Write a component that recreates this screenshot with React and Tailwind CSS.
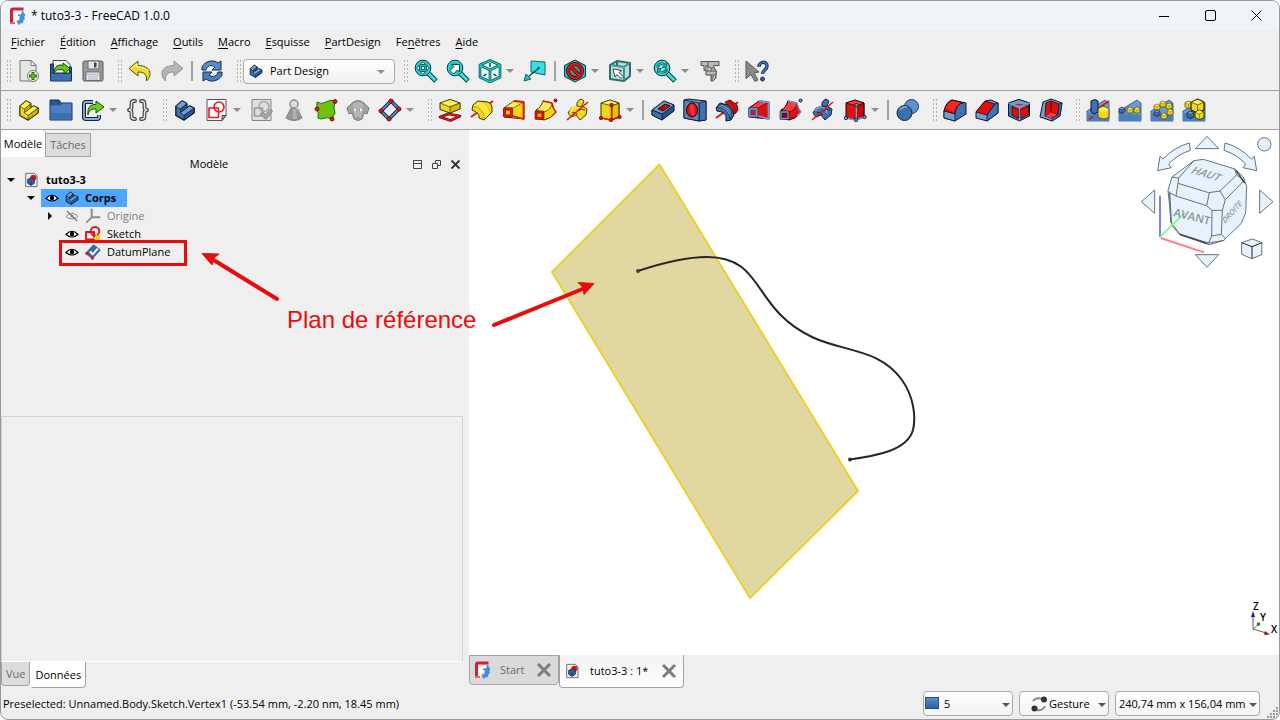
import React, { useState } from 'react';

/* --- PALETTE --- */

const Y = { light: '#fff05a', mid: '#f0d818', dark: '#c9a800', line: '#3a3300' };
const B = { light: '#729fcf', mid: '#3f72b4', dark: '#24508f', line: '#0b1521' };
const R = { light: '#ff3a3a', mid: '#dd0f0f', dark: '#a40000', line: '#280000' };
const T = { light: '#34e0e2', mid: '#16c3c6', dark: '#06989a', line: '#063a3c' };

/* --- ICONS --- */

const Icon = ({ children, className = 'h-6 w-6' }) => (
  <svg viewBox="0 0 24 24" className={className} fill="none" strokeLinejoin="round" aria-hidden="true">
    {children}
  </svg>
);

const Logo = ({ className }) => (
  <svg viewBox="0 0 16 18" className={className} fill="none" aria-hidden="true">
    <path d="M2.500 15.500V3Q2.500 2 4 2H14.500" stroke="#cf2435" strokeWidth="3" />
    <path d="M1 16H5V11.500H7" stroke="#ff5a64" strokeWidth="2" />
    <path d="M4 4H13V7H8.500V9H11V12H8V15H4Z" fill="#fff" />
    <path d="M13 4h1.500v2l1.500 1v2l-1 1 1 1.500-1 1.500-1 .5.5 1.500-1.500 1.500-1.500-.5-1 1.500H9l-.5-2-1-1 .5-1 2.500-.5V9H9V7.500H12Z" fill="#418fde" />
  </svg>
);

/* L shaped solid, used for the body, part and workbench entries */
const Solid = ({ c, className }) => (
  <Icon className={className}>
    <path d="M2 8l7-6 5 3v5l3-2.500 5 2.500v5l-11 8-9-5z" fill={c.mid} stroke={c.line} strokeWidth="1.400" />
    <path d="M2 8l7-6 5 3-7 6z" fill={c.light} stroke={c.line} strokeWidth=".7" />
    <path d="M7 11l7-6v5l-7 5z" fill={c.dark} stroke={c.line} strokeWidth=".7" />
    <path d="M7 15l10-7.500 5 2.500-11 8z" fill={c.light} stroke={c.line} strokeWidth=".7" />
    <path d="M11 18l11-8v5l-11 8z" fill={c.dark} fillOpacity=".7" stroke={c.line} strokeWidth=".7" />
  </Icon>
);

const Doc = ({ className }) => (
  <Icon className={className}>
    <path d="M4 2h13l4 4v16H4z" fill="#f4f4f2" stroke="#666" strokeWidth="1.400" />
    <circle cx="15.500" cy="8.500" r="4.500" fill="#d81414" />
    <path d="M7 11l5-2 5 2v6l-5 3-5-3z" fill="#2f62a8" stroke="#10233f" strokeWidth="1.200" />
    <path d="M12 13v7" stroke="#10233f" />
  </Icon>
);

const NewIcon = () => (
  <Icon>
    <path d="M3 1.500h11l5 5V22H3z" fill="#e6e7e3" stroke="#777" />
    <path d="M14 1.500l5 5h-5z" fill="#fff" stroke="#777" />
    <circle cx="16" cy="17" r="5.500" fill="#f4f4f4" stroke="#777" />
    <path d="M16 13v8M12 17h8" stroke="#2d6a00" strokeWidth="3" />
    <path d="M16 14v6M13 17h6" stroke="#73d216" strokeWidth="1.200" />
  </Icon>
);

const OpenIcon = () => (
  <Icon>
    <path d="M4 1.500h13l4 4v10H4z" fill="#f2f2f2" stroke="#444" />
    <path d="M1.500 5h3v9h16V8h2v14h-21z" fill="#27568f" stroke="#12325b" />
    <path d="M2 15h20v6.500H2z" fill="#3c6fb0" />
    <path d="M5 14C5 7 10 5 14 6.500V4l7 5.500-6 5.500v-3.500C11 10 8 10 5 14z" fill="#63c61b" stroke="#1c4d02" />
  </Icon>
);

const SaveIcon = () => (
  <Icon>
    <rect x="2" y="2" width="20" height="20" rx="1.500" fill="#9a9a96" stroke="#5a5a58" />
    <rect x="7" y="2" width="11" height="8" fill="#e5e5e5" stroke="#6b6b6b" />
    <rect x="13" y="3.500" width="2.500" height="5" fill="#444" />
    <rect x="5" y="13" width="14" height="8.500" fill="#f1f3f5" stroke="#6b6b6b" />
    <path d="M6 15.500h12" stroke="#a9c6e6" strokeWidth="2" />
    <path d="M7 18h10M7 20h10" stroke="#aaa" />
  </Icon>
);

const UndoIcon = () => (
  <Icon>
    <path d="M1 9.500L10 2v4.500c8 0 12.500 4 12 9-.3 3-2 5-3.500 6.500C19 16 17 13 10 13v4z" fill="#eedb2e" stroke="#5d5100" />
    <path d="M3 9.500L9 5v3c5 0 9 1 11 4" stroke="#fff9a5" />
  </Icon>
);

const RedoIcon = () => (
  <Icon>
    <path d="M23 9.500L14 2v4.500c-8 0-12.500 4-12 9 .3 3 2 5 3.500 6.500C5 16 7 13 14 13v4z" fill="#b5b5b5" stroke="#929292" />
  </Icon>
);

const RefreshIcon = () => (
  <Icon>
    <path d="M2 11V8c3-6 11-8 16-4l3-2v9h-9l3-3C11 5 7 7 6 11z" fill="#5b8ec9" stroke="#0f2c52" />
    <path d="M22 13v3c-3 6-11 8-16 4l-3 2v-9h9l-3 3c4 3 8 1 9-3z" fill="#4a7fc0" stroke="#0f2c52" />
  </Icon>
);

const Lens = ({ children }) => (
  <Icon>
    <path d="M14 14l8 8" stroke={T.line} strokeWidth="5" />
    <path d="M14 14l7.500 7.500" stroke={T.light} strokeWidth="3" />
    <circle cx="9" cy="9" r="7.800" fill={T.mid} stroke={T.line} />
    <circle cx="9" cy="9" r="6.600" stroke={T.light} />
    {children}
  </Icon>
);

const FitAllIcon = () => (
  <Lens>
    <path d="M9 2.500l2.500 3h-5zM9 15.500l2.500-3h-5zM2.500 9l3-2.500v5zM15.500 9l-3-2.500v5z" fill="#fff" stroke="#063a3c" strokeWidth=".8" />
    <rect x="7.500" y="7.500" width="3" height="3" fill="#fff" stroke="#063a3c" strokeWidth=".8" />
  </Lens>
);

const FitSelIcon = () => (
  <Lens>
    <path d="M4 11.500l4-4-2-2h7.500v7.500l-2-2-4 4z" fill="#fff" stroke="#063a3c" strokeWidth=".9" />
  </Lens>
);

const SyncViewIcon = () => (
  <Lens>
    <circle cx="9" cy="9" r="6" fill="#a4e5e3" />
    <path d="M4.500 8.500C5 4.500 9 4 11.500 5.500M13.500 9.500C13 13.500 9 14 6.500 12.500" stroke={T.line} strokeWidth="2.600" />
    <path d="M4.500 8.500C5 4.500 9 4 11.500 5.500M13.500 9.500C13 13.500 9 14 6.500 12.500" stroke={T.mid} strokeWidth="1.500" />
    <path d="M13.500 4v4.500H9.500zM4.500 14V9.500h4z" fill={T.mid} stroke={T.line} strokeWidth=".7" />
  </Lens>
);

const IsoIcon = () => (
  <Icon>
    <path d="M12 1.500l10 4.500v12l-10 5-10-5V6z" fill="#e8f6f6" stroke={T.line} strokeWidth="2.600" />
    <path d="M2 6l10 5 10-5M12 11v12" stroke={T.line} strokeWidth="2.600" />
    <path d="M12 1.500l10 4.500v12l-10 5-10-5V6zM2 6l10 5 10-5M12 11v12" stroke={T.mid} strokeWidth="1.400" />
    <path d="M12 4v4M5.500 17l3-2M18.500 17l-3-2" stroke={T.line} strokeWidth="1.500" />
  </Icon>
);

const AlignIcon = () => (
  <Icon>
    <path d="M8 2l14 1v13L8 13z" fill={T.light} stroke="#0b6a6c" />
    <path d="M16 9L5 18" stroke="#053d3e" strokeWidth="1.200" />
    <circle cx="15.500" cy="9" r="1.200" fill="#053d3e" />
    <path d="M1 22l2-7 5 5z" fill={T.mid} stroke="#0b6a6c" />
  </Icon>
);

const DrawStyleIcon = () => (
  <Icon>
    <path d="M12 1l10.500 5.500v11L12 23 1.500 17.500v-11z" fill={T.mid} stroke={T.line} />
    <circle cx="12" cy="12" r="7" fill="#4f8789" stroke="#3d0000" strokeWidth="3.800" />
    <path d="M7.500 7.500l9 9" stroke="#3d0000" strokeWidth="3.600" />
    <circle cx="12" cy="12" r="7" stroke="#d81818" strokeWidth="2.400" />
    <path d="M7 7l10 10" stroke="#d81818" strokeWidth="2.400" />
  </Icon>
);

const SelectViewIcon = () => (
  <Icon>
    <path d="M2 6l7-4 13 2v13l-6 5-14-2z" fill="#b4dfde" stroke="#2c6e70" strokeWidth="2" />
    <path d="M2 6l14 2 6-4M16 8v14M9 2v5" stroke="#2c6e70" strokeWidth="2" />
    <path d="M2.500 6.300l13.500 2 5.500-4M16 8v13.500" stroke="#7fd0d0" strokeWidth=".7" />
    <path d="M5 10l8.500 1.500-2.500 2 4 4-2 2-4-4-2 2.500z" fill="#fff" stroke="#333" strokeWidth=".9" />
  </Icon>
);

const MeasureIcon = () => (
  <Icon>
    <path d="M3 2.500h18v4h-5V9l2 2v8l-3 3h-2V9.500L8 6.500v5H6v-5H3z" fill="#b9bab6" stroke="#555753" />
    <path d="M8 12h10v4H8zM13 9h3M13 18h3M13 20h2M10 3v9" fill="#b9bab6" stroke="#555753" />
  </Icon>
);

const WhatsIcon = () => (
  <Icon>
    <path d="M1 2l13 11-5 1 4 7-3 1.500-4-7-5 4z" fill="#888a85" stroke="#555753" />
    <path d="M14 8c0-6 8-6 8-1 0 4-4.500 4-4.500 8" stroke="#1d3766" strokeWidth="3.500" />
    <path d="M14 8c0-6 8-6 8-1 0 4-4.500 4-4.500 8" stroke="#4b77b8" strokeWidth="1.500" />
    <circle cx="17.500" cy="20" r="2" fill="#3465a4" stroke="#1d3766" />
  </Icon>
);

const FolderIcon = () => (
  <Icon>
    <path d="M1 2h9l2 3h11v17H1z" fill="#27568f" stroke="#12325b" />
    <path d="M1.500 7h10l2-1.500h9V21.500h-21z" fill="#4d80bf" stroke="#2b5d9e" />
    <path d="M2 15h20v6.500H2z" fill="#3c6fb0" />
  </Icon>
);

const LinkIcon = () => (
  <Icon>
    <path d="M12 4H5Q3 4 3 6V19Q3 21 5 21H16Q18 21 18 19V17" stroke="#10233f" strokeWidth="4" />
    <path d="M12 4H5Q3 4 3 6V19Q3 21 5 21H16Q18 21 18 19V17" stroke="#86aedb" strokeWidth="1.800" />
    <path d="M7 17C6 9 10 6 15 6.500V3l8 6-8 6v-4C11 10.500 8 12 7 17z" fill="#6bcf1c" stroke="#1c4d02" />
  </Icon>
);

const bracesPath = 'M9 3H8Q5.500 3 5.500 6V9Q5.500 12 3 12 5.500 12 5.500 15V18Q5.500 21 8 21H9M15 3h1Q18.500 3 18.500 6V9Q18.500 12 21 12 18.500 12 18.500 15V18Q18.500 21 16 21H15';

const BracesIcon = () => (
  <Icon>
    <path d={bracesPath} stroke="#3a3d3e" strokeWidth="3.800" strokeLinecap="round" />
    <path d={bracesPath} stroke="#e4e6e6" strokeWidth="1.500" strokeLinecap="round" />
  </Icon>
);

const SketchNewIcon = () => (
  <Icon>
    <path d="M2 1.500h19v16l-4 5H2z" fill="#fff" stroke="#555" />
    <path d="M21 17.500l-4 5v-5z" fill="#aaa" stroke="#444" />
    <rect x="4" y="10" width="9.500" height="9.500" stroke="#f01818" strokeWidth="1.600" />
    <circle cx="14" cy="9" r="5" stroke="#f01818" strokeWidth="1.600" />
  </Icon>
);

const ValidateIcon = () => (
  <Icon>
    <path d="M2 1.500h19v21H2z" fill="#dedede" stroke="#888" />
    <rect x="4.500" y="10" width="8" height="8" stroke="#999" strokeWidth="1.500" />
    <circle cx="14" cy="8.500" r="5" stroke="#a5a5a5" strokeWidth="1.500" />
    <path d="M10 16l3-2 2.500 2.500 5-5.500 2 2-6.500 8.500z" fill="#a5a5a5" stroke="#8a8a8a" />
  </Icon>
);

const CheckGeoIcon = () => (
  <Icon>
    <path d="M9 10h6l5 10q-8 5-16 0z" fill="#989898" stroke="#808080" />
    <path d="M11 11h3l1 10h-4z" fill="#b0b0b0" />
    <circle cx="12" cy="6" r="4" fill="#ddd" stroke="#8f8f8f" strokeWidth="1.500" />
    <path d="M14 9l4 4" stroke="#c5c5c5" strokeWidth="2" />
  </Icon>
);

const BinderIcon = () => (
  <Icon>
    <path d="M3 4q5 3 9 0 5-3 9-1-2 8 0 12-3 6-4 6-3-2-6-1-4 2-7 0 1-6-1-8z" fill="#6ac50f" stroke="#2c6a00" />
    <circle cx="3" cy="11" r="2" fill="#e01515" stroke="#7a0000" strokeWidth=".8" />
    <circle cx="21" cy="3.500" r="2" fill="#e01515" stroke="#7a0000" strokeWidth=".8" />
    <circle cx="18" cy="21" r="2" fill="#e01515" stroke="#7a0000" strokeWidth=".8" />
  </Icon>
);

const CloneIcon = () => (
  <Icon>
    <path d="M6 5q6-5 12 0l5 5-2 6-3-1-2 6q-4 3-8 0l-2-6-3 1-2-6z" fill="#a2a2a2" stroke="#7d7d7d" />
    <path d="M7 6q0 9 3 15h4q3-6 3-15-5-4-10 0z" fill="#b5b5b5" />
    <circle cx="9.500" cy="12" r="1.300" fill="#fff" />
    <circle cx="14.500" cy="12" r="1.300" fill="#fff" />
    <path d="M10 12h1M13 12h1" stroke="#444" strokeWidth="1.200" />
    <path d="M10.500 20h3" stroke="#777" />
  </Icon>
);

const DatumIcon = () => (
  <Icon>
    <path d="M13 3l8 8-10 10-8-8z" stroke="#10233f" strokeWidth="3.800" />
    <path d="M13 3l8 8-10 10-8-8z" stroke="#4d80bf" strokeWidth="2" />
    {[[13, 3], [21, 11], [11, 21], [3, 13]].map(([x, y]) => (
      <circle key={x} cx={x} cy={y} r="2" fill="#e01515" stroke="#7a0000" strokeWidth=".8" />
    ))}
  </Icon>
);

const PadIcon = () => (
  <Icon>
    <path d="M2 19l8-3 12 2-9.500 4.500z" fill="#f5f5f5" stroke="#500000" strokeWidth="2.600" />
    <path d="M2 19l8-3 12 2-9.500 4.500z" stroke="#e01515" strokeWidth="1.400" />
    <path d="M2 5v6.500l10 3.500 10-4V5L12 1.500z" fill={Y.mid} stroke={Y.line} />
    <path d="M2 5l10-3.500L22 5l-10 4z" fill={Y.light} stroke={Y.line} strokeWidth=".7" />
    <path d="M12 9v6l10-4V5z" fill="#d8b90c" stroke={Y.line} strokeWidth=".7" />
  </Icon>
);

const RevolveIcon = () => (
  <Icon>
    <path d="M1 19L23 3" stroke="#e01515" strokeWidth="2" />
    <path d="M2 12l1-5 5-4 10 1q4 2 4 5v5l-8 8-5-2q1-5-7-8z" fill={Y.mid} stroke={Y.line} />
    <path d="M3 8l5-4q7 1 10 7l1 5-4.500 5Q14 9 3 8z" fill={Y.light} fillOpacity=".7" />
    <path d="M3 8q11 2 11.500 13" stroke={Y.dark} />
  </Icon>
);

const Loft = ({ c, edge, dark }) => (
  <Icon>
    <path d="M2 10L12 3l10 1v17L2 19z" fill={c.mid} stroke={c.line} />
    <path d="M2 10L12 3l10 1-11 6z" fill={c.light} stroke={c.line} strokeWidth=".6" />
    <path d="M12 3l9.500 1v17L11 18" stroke={edge} strokeWidth="1.800" />
    <rect x="2.500" y="11" width="7" height="7" fill={c.mid} stroke={dark} strokeWidth="2.800" />
    <rect x="2.500" y="11" width="7" height="7" stroke={edge} strokeWidth="1.600" />
  </Icon>
);

const Pipe = ({ c, edge, dark }) => (
  <Icon>
    <path d="M2 12Q7 10 9 3l9 2q1 6 4 9-5 7-12 8l-8-2z" fill={c.mid} stroke={c.line} />
    <path d="M2 12Q7 10 9 3l9 2q-1 7-8 9z" fill={c.light} stroke={c.line} strokeWidth=".7" />
    <path d="M9 3l9 2q1 6 4 9l-4 4" stroke={edge} strokeWidth="1.400" />
    <rect x="2" y="14" width="7" height="6.500" fill={c.dark} stroke={dark} strokeWidth="2.600" />
    <rect x="2" y="14" width="7" height="6.500" stroke={edge} strokeWidth="1.400" />
    <circle cx="21.500" cy="2.500" r="1.500" fill={edge} stroke={dark} />
  </Icon>
);

const Helix = ({ c, edge }) => (
  <Icon>
    <path d="M11 8q-1-5 4-7l3 2-2 5 5 3-1 6-6 5-4-5-5 2-3-4 3-5z" fill={c.mid} stroke={c.line} strokeWidth=".9" />
    <path d="M4 13q2-4 7-4 4 1 5 6" stroke={c.light} strokeWidth="1.800" />
    <path d="M6 15q4-2 5 2M16 8q-3 1-5 0M12 13q3-3 7-1" stroke={c.line} strokeWidth=".9" />
    <path d="M1 22L22 4" stroke={edge} strokeWidth="1.600" />
  </Icon>
);

const Cube = ({ c, edge, dark }) => (
  <Icon>
    <path d="M3 5l9-3 9 3v14l-8 3-10-2z" fill={c.mid} stroke={c.line} />
    <path d="M3 5l9-3 9 3-7 3z" fill={c.light} stroke={c.line} strokeWidth=".7" />
    <path d="M14 8l7-3v14l-7 3z" fill={c.dark} fillOpacity=".45" stroke={c.line} strokeWidth=".7" />
    <path d="M3 20l10 2 8-3M13.500 7v15" stroke={edge} strokeWidth="1.500" />
    {[[3, 20], [13.5, 7], [13, 22], [21.5, 19]].map(([x, y]) => (
      <circle key={x} cx={x} cy={y} r="1.700" fill={edge} stroke={dark} strokeWidth=".8" />
    ))}
  </Icon>
);

const PocketIcon = () => (
  <Icon>
    <path d="M1 12L13 3l10 4v6l-12 9-10-5z" fill={B.dark} stroke={B.line} />
    <path d="M1 12L13 3l10 4-12 9z" fill={B.light} stroke={B.line} strokeWidth=".8" />
    <path d="M1 12l10 4v6L1 17z" fill={B.mid} stroke={B.line} strokeWidth=".8" />
    <path d="M7 11l7-5 5 2-7 5z" fill={R.mid} stroke={R.line} />
    <path d="M7 11l7-5v4l-3 2.500z" fill={R.dark} />
  </Icon>
);

const HoleIcon = () => (
  <Icon>
    <path d="M1 2l4-1 18 2v19l-7 1-15-3z" fill={B.light} stroke={B.line} />
    <path d="M16 5l7-2v19l-7 1z" fill={B.mid} stroke={B.line} strokeWidth=".8" />
    <path d="M1 2l15 3v18L1 20z" fill="#5788c4" stroke={B.line} strokeWidth=".8" />
    <ellipse cx="9" cy="12" rx="5.500" ry="7" fill={R.mid} stroke={R.line} />
    <path d="M8 5.500q5 3 3 12.500-6-2-3-12.500z" fill={R.light} />
  </Icon>
);

const GrooveIcon = () => (
  <Icon>
    <path d="M1 20L23 4" stroke="#e01515" strokeWidth="2" />
    <path d="M10 4l5-2 7 5 1 5-3 4-7-8z" fill={R.mid} stroke={R.line} strokeWidth=".8" />
    <path d="M14 3q6 4 7 12" stroke={R.dark} />
    <path d="M1 10l4-5 8 2q6 5 6 10l-3 5-5 1v-6l-4-3-5-1z" fill={B.mid} stroke={B.line} />
    <path d="M2 9l4-3q9 2 11 10l-2 5Q14 11 2 9z" fill={B.light} stroke={B.line} strokeWidth=".7" />
    <path d="M4 7.500q11 3 12.500 11" stroke={B.dark} strokeWidth=".9" />
  </Icon>
);

const BooleanIcon = () => (
  <Icon>
    <circle cx="15.500" cy="8.500" r="7" fill="#5f92cb" stroke="#1b3f70" />
    <circle cx="8.500" cy="15" r="7.500" fill="#3c6fb0" stroke="#10233f" />
    <path d="M4 12q3-4 7-3" stroke={B.light} strokeWidth="2" />
  </Icon>
);

const FilletIcon = () => (
  <Icon>
    <path d="M1 13Q3 4 9 2l14 3v11l-11 7-11-3z" fill={B.mid} stroke={B.line} />
    <path d="M1 13Q3 4 9 2l11 3q-7 1-8 11z" fill={R.mid} stroke={R.line} strokeWidth=".8" />
    <path d="M3 10q2-6 7-7l8 2q-6 2-7 9z" fill={R.light} fillOpacity=".6" />
    <path d="M1 13l11 3v7L1 20z" fill={B.light} stroke={B.line} strokeWidth=".8" />
  </Icon>
);

const ChamferIcon = () => (
  <Icon>
    <path d="M1 14L10 3l6-1 7 3v10l-11 8-11-3z" fill={B.light} stroke={B.line} />
    <path d="M1 14L10 3l10 3-8 11z" fill={R.mid} stroke={R.line} strokeWidth=".8" />
    <path d="M12 17l8-11 3-1v10l-11 8z" fill={B.mid} stroke={B.line} strokeWidth=".8" />
  </Icon>
);

const DraftIcon = () => (
  <Icon>
    <path d="M1.500 5L12 1.500 22.500 5v13L12.500 23l-11-5z" fill={B.mid} stroke={B.line} />
    <path d="M1.500 5L12 1.500 22.500 5 12.500 9z" fill={B.light} stroke={B.line} strokeWidth=".8" />
    <path d="M5 9l6.500 2.500v9L5 17zM21.500 8l-8 3.500v9l8-4z" fill={R.mid} stroke={R.line} strokeWidth=".7" />
    <path d="M5 9l6-3 10.500 2-8.500 3.500z" fill={R.light} stroke={R.line} strokeWidth=".5" />
    <path d="M1.500 5l11 4 10-4M12.500 9v13.500" stroke={B.light} strokeWidth="1.400" />
  </Icon>
);

const ThicknessIcon = () => (
  <Icon>
    <path d="M4 4l8-3 11 4-2 13-8 5-12-4z" fill={B.light} stroke={B.line} />
    <path d="M7 5l5-2 8 3-1 11-7 3-6-2z" fill={R.mid} stroke={R.line} strokeWidth=".8" />
    <path d="M12 3v11l7 3M12 14l-6 4" stroke={R.line} strokeWidth=".8" />
    <path d="M12 14l7 3-7 3-6-2z" fill={R.light} />
    <path d="M20 6l3-1-2 13-8 5v-3l6-3z" fill={B.mid} stroke={B.line} strokeWidth=".7" />
  </Icon>
);

/* small cube used by the pattern tools */
const Mini = ({ x, y, s = 6, c = Y }) => (
  <g transform={`translate(${x} ${y}) scale(${s / 6})`}>
    <path d="M0 1.500L3 0l3 1.500V5L3 6.500 0 5z" fill={c.mid} stroke={c.line} strokeWidth=".6" />
    <path d="M.4 1.500L3 .4l2.600 1.100L3 2.700z" fill={c.light} />
    <path d="M0 1.500l3 1.200 3-1.200M3 2.700v3.800" stroke={c.line} strokeWidth=".3" />
  </g>
);

const Slope = ({ children }) => (
  <Icon>
    <path d="M1 13L19 2l4 3v18H1z" fill="#6b9bd2" stroke={B.dark} strokeWidth=".8" />
    <path d="M1 15l22 2v6H1z" fill="#4c7fbe" />
    {children}
  </Icon>
);

const MirrorIcon = () => (
  <Slope>
    <path d="M13 10l10-7" stroke="#e01515" strokeWidth="2" />
    <path d="M5 3l4-1.500L12 3v11l-4 2-3-2z" fill={B.mid} stroke={B.line} />
    <path d="M12 12q0-2 5-4 6 2 6 4v7q-5 4-11 0z" fill={Y.mid} stroke={Y.line} strokeWidth=".7" />
    <ellipse cx="17.500" cy="11.500" rx="4.500" ry="2" fill={Y.light} />
    <path d="M3 21.500l4-3" stroke="#e01515" strokeWidth="2" />
  </Slope>
);

const LinearIcon = () => (
  <Slope>
    <Mini x={1} y={9} c={B} /><Mini x={9} y={9} /><Mini x={16} y={9} />
  </Slope>
);

const PolarIcon = () => (
  <Slope>
    <Mini x={4} y={6} /><Mini x={10} y={3} /><Mini x={16} y={5} /><Mini x={17} y={11} /><Mini x={11} y={15} /><Mini x={4} y={12} c={B} />
  </Slope>
);

const MultiIcon = () => (
  <Slope>
    <Mini x={3} y={3} s={7} /><Mini x={9} y={1} s={13} /><Mini x={5} y={13} s={7} c={B} /><Mini x={13} y={12} s={9} />
  </Slope>
);

const Eye = ({ off }) => (
  <svg viewBox="0 0 14 12" className="h-3 w-3.5 shrink-0" fill="none" aria-hidden="true">
    <path d="M1 6.500Q7 0 13 6.500 7 11.500 1 6.500z" fill={off ? 'none' : '#fff'} stroke={off ? '#888' : '#000'} strokeWidth={off ? 1 : 1.2} />
    <circle cx="7" cy="6" r={off ? 1.6 : 2.2} fill={off ? '#999' : '#000'} />
    {off && <path d="M2 1l10 10" stroke="#777" strokeWidth="1.200" />}
  </svg>
);

const OriginIcon = () => (
  <Icon className="h-4 w-4 shrink-0">
    <path d="M10 1v13h13M10 14l-8 8" stroke="#8d8d8d" strokeWidth="3" />
  </Icon>
);

const SketchIcon = () => (
  <Icon className="h-4 w-4 shrink-0">
    <rect x="1.500" y="9" width="12" height="11" stroke="#d3161d" strokeWidth="2.800" />
    <circle cx="15" cy="8" r="6.500" stroke="#d3161d" strokeWidth="2.800" />
    <path d="M17 11l2 3.500 4.500-1-2 4.500 2 4.500-4.500-1-3 2.500-1-4-4-2 4-2z" fill="#f4c71c" />
  </Icon>
);

const PlaneIcon = () => (
  <Icon className="h-4 w-4 shrink-0">
    <path d="M13 3l8 6-10 11-8-6z" fill="#3c6aa8" stroke="#3c6aa8" strokeWidth="4" />
    <path d="M7.500 11l4 4.500L19 7" stroke="#fff" strokeWidth="3" />
    <circle cx="3" cy="14" r="2.500" fill="#e01515" />
    <circle cx="11" cy="21" r="2.500" fill="#e01515" />
  </Icon>
);

/* --- TOOLBARS --- */

const Tool = ({ label, children }) => (
  <button type="button" aria-label={label} className="flex h-8 w-8 shrink-0 items-center justify-center">{children}</button>
);

const Caret = ({ label = 'Plus' }) => (
  <button type="button" aria-label={label} className="flex h-8 w-[13px] shrink-0 items-center">
    <span className="border-x-4 border-t-4 border-x-transparent border-t-[#8c8c8c]" />
  </button>
);

const Sep = () => (
  <span className="flex w-2 shrink-0 justify-center"><span className="h-5 w-0.5 bg-[#a3a3a3]" /></span>
);

const Group = ({ children }) => (
  <div className="flex items-center">
    <span className="flex w-2 shrink-0 justify-center">
      <span className="h-6 w-1.5 bg-[radial-gradient(circle,#b4b4b4_1px,transparent_1px)] bg-[size:3px_4px]" />
    </span>
    {children}
  </div>
);

const menus = [
  ['F', 'ichier'], ['É', 'dition'], ['A', 'ffichage'], ['O', 'utils'], ['M', 'acro'],
  ['E', 'squisse'], ['P', 'artDesign'], ['Fe', 'nêtres'], ['A', 'ide'],
];

const TitleBar = () => (
  <header className="flex h-[29px] items-center bg-[#f0f3f8] pl-2">
    <Logo className="h-[18px] w-4" />
    <h1 className="ml-1.5 flex-1 text-[12px]">* tuto3-3 - FreeCAD 1.0.0</h1>
    <button type="button" aria-label="Réduire" className="flex h-full w-[46px] items-center justify-center">
      <svg viewBox="0 0 10 10" className="h-2.5 w-2.5" stroke="#000"><path d="M0 5.500h10" /></svg>
    </button>
    <button type="button" aria-label="Agrandir" className="flex h-full w-[46px] items-center justify-center">
      <svg viewBox="0 0 11 11" className="h-[11px] w-[11px]" fill="none" stroke="#000"><rect x=".5" y=".5" width="10" height="10" rx="1.500" /></svg>
    </button>
    <button type="button" aria-label="Fermer" className="flex h-full w-[46px] items-center justify-center">
      <svg viewBox="0 0 11 11" className="h-[11px] w-[11px]" stroke="#000"><path d="M.5.5l10 10M10.500.5l-10 10" /></svg>
    </button>
  </header>
);

const MenuBar = () => (
  <nav className="flex h-6 items-center gap-[15px] pl-2.5">
    {menus.map(([a, b]) => (
      <button type="button" key={a + b}>
        {a === 'Fe'
          ? <>Fe<span className="underline underline-offset-2">n</span>êtres</>
          : <><span className="underline underline-offset-2">{a}</span>{b}</>}
      </button>
    ))}
  </nav>
);

const FileBar = () => (
  <div className="flex h-[37px] items-center gap-[7px] border-b border-[#a3a3a3] pb-0.5 pl-1">
    <Group>
      <Tool label="Nouveau"><NewIcon /></Tool>
      <Tool label="Ouvrir"><OpenIcon /></Tool>
      <Tool label="Enregistrer"><SaveIcon /></Tool>
    </Group>
    <Group>
      <Tool label="Annuler"><UndoIcon /></Tool>
      <Tool label="Rétablir"><RedoIcon /></Tool>
      <Sep />
      <Tool label="Actualiser"><RefreshIcon /></Tool>
    </Group>
    <Group>
      <div className="relative">
        <select aria-label="Atelier" className="h-[25px] w-[152px] appearance-none rounded-sm border border-[#a9a9a9] bg-linear-to-b from-white to-[#f0f0f0] pl-[26px]">
          <option>Part Design</option>
        </select>
        <span className="pointer-events-none absolute top-[5px] left-1.5"><Solid c={B} className="h-3.5 w-3.5" /></span>
        <span className="pointer-events-none absolute top-[11px] right-2.5 border-x-4 border-t-4 border-x-transparent border-t-[#8c8c8c]" />
      </div>
    </Group>
    <Group>
      <Tool label="Tout afficher"><FitAllIcon /></Tool>
      <Tool label="Afficher la sélection"><FitSelIcon /></Tool>
      <Tool label="Vue isométrique"><IsoIcon /></Tool>
      <Caret />
      <Tool label="Aligner sur la sélection"><AlignIcon /></Tool>
      <Sep />
      <Tool label="Style de représentation"><DrawStyleIcon /></Tool>
      <Caret />
      <Tool label="Sélection"><SelectViewIcon /></Tool>
      <Caret />
      <Tool label="Synchroniser la vue"><SyncViewIcon /></Tool>
      <Caret />
      <Tool label="Mesurer"><MeasureIcon /></Tool>
    </Group>
    <Group>
      <Tool label="Qu'est-ce que c'est ?"><WhatsIcon /></Tool>
    </Group>
  </div>
);

const red = '#e01515';
const blue = '#6d9bd3';

const DesignBar = () => (
  <div className="flex h-[39px] items-center gap-[7px] border-b border-[#a3a3a3] pl-1">
    <Group>
      <Tool label="Pièce"><Solid c={Y} className="h-[22px] w-[22px]" /></Tool>
      <Tool label="Groupe"><FolderIcon /></Tool>
      <Tool label="Lien"><LinkIcon /></Tool>
      <Caret />
      <Tool label="VarSet"><BracesIcon /></Tool>
    </Group>
    <Group>
      <Tool label="Corps"><Solid c={B} className="h-[22px] w-[22px]" /></Tool>
      <Tool label="Nouvelle esquisse"><SketchNewIcon /></Tool>
      <Caret />
      <Tool label="Valider l'esquisse"><ValidateIcon /></Tool>
      <Tool label="Vérifier la géométrie"><CheckGeoIcon /></Tool>
      <Tool label="Forme liée"><BinderIcon /></Tool>
      <Tool label="Clone"><CloneIcon /></Tool>
      <Tool label="Plan de référence"><DatumIcon /></Tool>
      <Caret />
    </Group>
    <Group>
      <Tool label="Protrusion"><PadIcon /></Tool>
      <Tool label="Révolution"><RevolveIcon /></Tool>
      <Tool label="Lissage additif"><Loft c={Y} edge={red} dark={R.dark} /></Tool>
      <Tool label="Balayage additif"><Pipe c={Y} edge={red} dark="#7a0000" /></Tool>
      <Tool label="Hélice additive"><Helix c={Y} edge={red} /></Tool>
      <Tool label="Primitive additive"><Cube c={Y} edge={red} dark="#7a0000" /></Tool>
      <Caret />
      <Sep />
      <Tool label="Cavité"><PocketIcon /></Tool>
      <Tool label="Perçage"><HoleIcon /></Tool>
      <Tool label="Rainure"><GrooveIcon /></Tool>
      <Tool label="Lissage soustractif"><Loft c={R} edge={blue} dark={B.dark} /></Tool>
      <Tool label="Balayage soustractif"><Pipe c={R} edge={blue} dark={B.line} /></Tool>
      <Tool label="Hélice soustractive"><Helix c={B} edge={red} /></Tool>
      <Tool label="Primitive soustractive"><Cube c={R} edge={blue} dark={B.line} /></Tool>
      <Caret />
      <Sep />
      <Tool label="Opération booléenne"><BooleanIcon /></Tool>
    </Group>
    <Group>
      <Tool label="Congé"><FilletIcon /></Tool>
      <Tool label="Chanfrein"><ChamferIcon /></Tool>
      <Tool label="Dépouille"><DraftIcon /></Tool>
      <Tool label="Évidement"><ThicknessIcon /></Tool>
    </Group>
    <Group>
      <Tool label="Symétrie"><MirrorIcon /></Tool>
      <Tool label="Répétition linéaire"><LinearIcon /></Tool>
      <Tool label="Répétition circulaire"><PolarIcon /></Tool>
      <Tool label="Transformation multiple"><MultiIcon /></Tool>
    </Group>
  </div>
);

/* --- MODEL PANEL --- */

const Arrow = ({ open }) => (
  <span className="flex w-2.5 shrink-0 justify-center">
    {open
      ? <span className="border-x-4 border-t-4 border-x-transparent border-t-black" />
      : <span className="border-y-4 border-l-4 border-y-transparent border-l-black" />}
  </span>
);

const Tree = () => (
  <ul className="flex-1">
    <li className="flex h-[18px] items-center gap-1.5 pl-[5px]">
      <Arrow open /><Doc className="h-4 w-[18px]" /><b>tuto3-3</b>
    </li>
    <li className="flex h-[18px] items-center pl-[25px]">
      <Arrow open />
      <span className="ml-[5px] flex h-full w-[86px] items-center gap-1.5 bg-[#4da6ff] pl-1">
        <Eye /><Solid c={B} className="h-3.5 w-3.5" /><b>Corps</b>
      </span>
    </li>
    <li className="flex h-[18px] items-center pl-11 text-[#808080]">
      <Arrow /><span className="ml-2.5 flex items-center gap-1.5"><Eye off /><OriginIcon />Origine</span>
    </li>
    <li className="flex h-[18px] items-center gap-1.5 pl-16"><Eye /><SketchIcon />Sketch</li>
    <li className="flex h-[18px] items-center gap-1.5 pl-16"><Eye /><PlaneIcon />DatumPlane</li>
  </ul>
);

const ModelPanel = () => {
  const [tab, setTab] = useState('Données');
  const on = 'border-white bg-white h-[26px]';
  const off = 'border-l-[#a3a3a3] bg-[#dcdcdc] text-[#6b6b6b] h-6';

  return (
    <aside className="flex w-[468px] shrink-0 flex-col">
      <div className="flex h-[27px] items-end">
        <button type="button" className="h-[27px] w-[45px] rounded-t-sm border-r border-[#a3a3a3] bg-white">Modèle</button>
        <button type="button" className="h-6 w-[45px] border border-l-0 border-[#a3a3a3] bg-[#dcdcdc] text-[#6b6b6b]">Tâches</button>
      </div>
      <div className="flex h-3.5 items-center pr-2 pl-[5px]">
        <h2 className="flex-1 text-center">Modèle</h2>
        <div className="flex items-center gap-2">
          <button type="button" aria-label="Réduire le panneau">
            <svg viewBox="0 0 11 11" className="h-[11px] w-[11px]" fill="none" stroke="#444"><path d="M1.500 1.500h8v8h-8zM1.500 4.500h8" /></svg>
          </button>
          <button type="button" aria-label="Détacher le panneau">
            <svg viewBox="0 0 11 11" className="h-[11px] w-[11px]" fill="none" stroke="#444"><path d="M1.500 4.500h5v5h-5zM4.500 4V1.500h5v5H7" /></svg>
          </button>
          <button type="button" aria-label="Fermer le panneau">
            <svg viewBox="0 0 11 11" className="h-[11px] w-[11px]" stroke="#333" strokeWidth="1.800"><path d="M1.500 1.500l8 8M9.500 1.500l-8 8" /></svg>
          </button>
        </div>
      </div>
      <Tree />
      <div className="mr-1.5 h-[246px] border border-[#d4d4d4] border-b-white" />
      <div className="flex h-[26px] items-start">
        {['Vue', 'Données'].map((name) => (
          <button
            type="button"
            key={name}
            onClick={() => setTab(name)}
            className={`rounded-b-sm border border-t-0 border-r-[#a3a3a3] border-b-[#a3a3a3] px-1 ${tab === name ? on : off}`}
          >
            {name}
          </button>
        ))}
      </div>
    </aside>
  );
};

/* --- 3D VIEW --- */

const NavCube = () => (
  <svg viewBox="0 6 447 432" className="absolute top-0 right-0 h-36 w-[149px]" fill="#e6f2fd" stroke="#68727c" strokeWidth="3" strokeLinejoin="round">
    <path d="M231 25l35 37h-70zM231 418l35-38h-70zM34 221l40-35v70zM429 221l-40-35v70z" />
    <path d="M178 45l3 22q-38 12-65 41l8 11-41 9 7-43 9 8q34-36 79-48z" />
    <path d="M285 45l-3 22q38 12 65 41l-8 11 41 9-7-43-9 8q-34-36-79-48z" />
    <circle cx="403" cy="49" r="20" />
    <path d="M335 344l32-11 29 11-1 36-30 12-30-13z" />
    <path d="M335 344l31 12 30-12M366 356v36" stroke="#222" />
    <path d="M192 98l28-4 95 29 25 24 10 28-3 80-14 32-53 51-43 12-87-30-26-36-10-97 12-40z" />
    <path d="M192 98l-46 52-2 16 92 28 34-5 50-48-6-18M144 166l-6 38 92 29 8-39M138 204l-20-10M126 147l20 3M230 233l16 14h31l9-32-16-26M286 215l56-57-22-17M246 247l-1 77M277 247l-3 72M119 190l6 102 22 25 88 28 10-21 29-5 14 14M235 345l48-8M118 194l4 90" fill="none" />
    <path d="M148 319l84 28M318 127l26 38" stroke="#444" strokeWidth="4" />
    <path d="M90 327V203" stroke="#8080f0" strokeWidth="6" />
    <path d="M92 326l73-73" stroke="#80ff80" strokeWidth="6" />
    <path d="M92 330l130 43" stroke="#ff8080" strokeWidth="6" />
    <g fill="#8b949c" stroke="none" fontFamily="'Open Sans', sans-serif" fontWeight="600" fontSize="32">
      <text transform="translate(180 134) rotate(17) skewX(-24)">HAUT</text>
      <text transform="translate(129 264) rotate(14)" fontSize="34">AVANT</text>
      <text transform="translate(284 288) rotate(-48) skewX(-20)" fontSize="22">DROITE</text>
    </g>
  </svg>
);

const AxisCross = () => (
  <svg viewBox="0 0 30 38" className="absolute right-0 bottom-[18px] h-[38px] w-[30px]" fontFamily="'Open Sans', sans-serif" fontSize="10" fontWeight="600">
    <path d="M4 30V16" stroke="#5050b0" /><path d="M4 12l2 6H2z" fill="#202090" />
    <path d="M4 30l6-5" stroke="#30a030" /><circle cx="9.500" cy="25" r="1.800" fill="#208020" />
    <path d="M4 30l13 4" stroke="#b04040" /><path d="M21 35.500l-6 .5 1-4z" fill="#902020" />
    <text x="4" y="11">Z</text><text x="11" y="22">Y</text><text x="22" y="34">X</text>
  </svg>
);

const View = () => (
  <div className="relative flex-1 overflow-hidden bg-white">
    <svg className="absolute inset-0 h-full w-full" fill="none" aria-label="Vue 3D">
      <path d="M190.500 34.500L83 142l198 326L389 361z" fill="#e1d7a1" stroke="#ecd02c" strokeWidth="2" strokeLinejoin="round" />
      <path d="M169 141C190 134 214 127 238 127C296 127 282 178 343 207C374 222 410 218 433 250C445 267 447 287 444 300C438 321 406 326 381 329.500" stroke="#262626" strokeWidth="2" />
      <circle cx="169" cy="141" r="2" fill="#444" />
      <circle cx="381" cy="329.500" r="2" fill="#333" />
    </svg>
    <NavCube />
    <AxisCross />
  </div>
);

const CloseTab = ({ label }) => (
  <button type="button" aria-label={label}>
    <svg viewBox="0 0 14 14" className="h-3.5 w-3.5" stroke="#7d7d7d" strokeWidth="3"><path d="M1 1l12 12M13 1L1 13" /></svg>
  </button>
);

const DocTabs = () => (
  <div className="flex h-[33px] items-start">
    <div className="flex h-[30px] w-[90px] items-center rounded-b-sm border border-[#a3a3a3] bg-[#dadada] pr-[7px] pl-1 text-[#6b6b6b]">
      <Logo className="h-[18px] w-4" /><span className="ml-2.5 flex-1">Start</span><CloseTab label="Fermer Start" />
    </div>
    <div className="flex h-[33px] w-[125px] items-center rounded-b-sm border border-t-0 border-[#a3a3a3] bg-linear-to-b from-[#f3f3f3] to-white pr-[7px] pl-1">
      <Doc className="h-4 w-4" /><span className="ml-2.5 flex-1">tuto3-3 : 1*</span><CloseTab label="Fermer tuto3-3" />
    </div>
  </div>
);

/* --- ANNOTATIONS --- */

const Callouts = () => (
  <div className="pointer-events-none absolute inset-0 overflow-hidden text-[#e90c0c]">
    <div className="absolute top-[110px] left-[58px] h-[26px] w-32 border-3 border-[#e90c0c]" />
    <svg className="absolute inset-0 h-full w-full" stroke="currentColor" fill="currentColor" strokeLinejoin="round">
      <path d="M276 169L211 129M493 195L584 158" strokeWidth="4" strokeLinecap="round" />
      <path d="M201 123.500l17 .5-5 4-2 7zM593 153.500l-10 11-1-7-5-5z" strokeWidth="1" />
    </svg>
    <p className="absolute top-[174px] left-[286px] font-['Liberation_Sans',sans-serif] text-[24px] leading-8 whitespace-nowrap">Plan de référence</p>
  </div>
);

/* --- STATUS BAR --- */

const box = 'h-[25px] w-full appearance-none rounded-sm border border-[#a9a9a9] bg-linear-to-b from-white to-[#f3f3f3]';

const StatusArrow = () => (
  <span className="pointer-events-none absolute top-3 right-[3px] border-x-4 border-t-4 border-x-transparent border-t-[#555]" />
);

const StatusBar = () => (
  <footer className="relative flex h-[31px] items-center gap-1.5 pr-[19px] pl-0.5">
    <p className="flex-1">Preselected: Unnamed.Body.Sketch.Vertex1 (-53.54 mm, -2.20 nm, 18.45 mm)</p>
    <div className="relative w-[90px]">
      <select aria-label="Notifications" className={`${box} pl-5`}><option>5</option></select>
      <span className="pointer-events-none absolute top-1.5 left-0.5 h-3 w-3.5 border border-[#24508f] bg-linear-to-b from-[#5b8bc8] to-[#2f62a8]" />
      <StatusArrow />
    </div>
    <div className="relative w-[90px]">
      <select aria-label="Style de navigation" className={`${box} pl-[29px]`}><option>Gesture</option></select>
      <svg viewBox="0 0 16 16" className="pointer-events-none absolute top-[5px] left-3 h-4 w-4" fill="none" aria-hidden="true">
        <path d="M2 5Q5 1 11 3M14 10q-2 5-8 4" stroke="#8a8a8a" strokeWidth="2" />
        <circle cx="13" cy="3.500" r="3" fill="#2e3436" /><circle cx="3.500" cy="12.500" r="3" fill="#2e3436" />
      </svg>
      <StatusArrow />
    </div>
    <div className="relative w-[145px]">
      <select aria-label="Dimensions" className={`${box} pl-[3px]`}><option>240,74 mm x 156,04 mm</option></select>
      <StatusArrow />
    </div>
    {/* resize grip */}
    <svg viewBox="0 0 12 12" className="absolute right-0 bottom-0 h-3 w-3" fill="#9a9a9a" aria-hidden="true">
      <path d="M9 0h2v2H9zM9 3h2v2H9zM6 3h2v2H6zM9 6h2v2H9zM6 6h2v2H6zM3 6h2v2H3zM9 9h1v2H9zM6 9h2v2H6zM3 9h2v2H3zM0 9h2v2H0z" />
    </svg>
  </footer>
);

const App = () => (
  <div className="flex min-h-screen flex-col overflow-hidden rounded-lg border border-[#999] bg-[#efefef] font-['Open_Sans',sans-serif] text-[11px] leading-4 text-black">
    <TitleBar />
    <MenuBar />
    <FileBar />
    <DesignBar />
    <main className="relative flex flex-1">
      <ModelPanel />
      <section className="flex min-w-0 flex-1 flex-col">
        <View />
        <DocTabs />
      </section>
      <Callouts />
    </main>
    <StatusBar />
  </div>
);

export default App;
